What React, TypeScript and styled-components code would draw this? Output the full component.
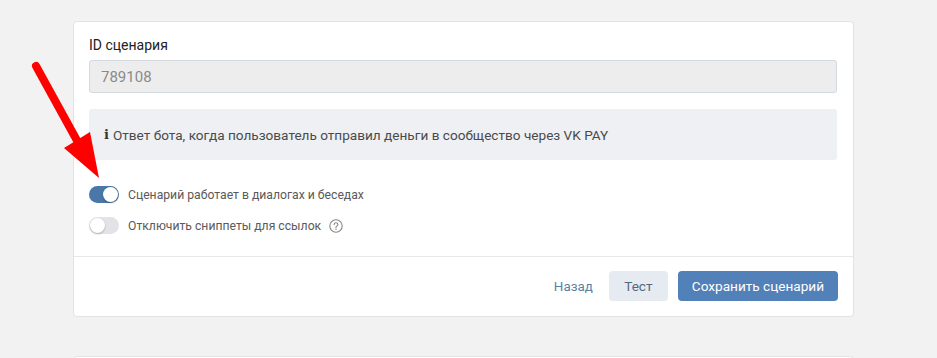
import React, { useState } from "react";
import styled, { createGlobalStyle } from "styled-components";

const GlobalStyle = createGlobalStyle`
  html, body {
    margin: 0;
    padding: 0;
    background: #f2f2f2;
  }
  body {
    font-family: Roboto, "Open Sans", "Liberation Sans", sans-serif;
    -webkit-font-smoothing: antialiased;
  }
`;

const Page = styled.div`
  position: relative;
  width: 937px;
  height: 358px;
  overflow: hidden;
  padding: 21px 0 0 73px;
  box-sizing: border-box;
  display: flex;
  flex-direction: column;
  gap: 39px;
`;

const Card = styled.div`
  width: 781px;
  box-sizing: border-box;
  background: #fff;
  border: 1px solid #e1e3e6;
  border-radius: 4px;
  flex-shrink: 0;
`;

const CardBody = styled.div`
  padding: 15px 16px 22px 15px;
  display: flex;
  flex-direction: column;
`;

const Label = styled.div`
  font-size: 14px;
  color: #222;
  line-height: 16px;
  margin-bottom: 7px;
`;

const Input = styled.div`
  height: 33px;
  box-sizing: border-box;
  border: 1px solid #d3d9de;
  background: #ededed;
  border-radius: 3px;
  padding: 0 11px;
  display: flex;
  align-items: center;
  font-size: 15px;
  color: #8a8a8a;
`;

const InfoBox = styled.div`
  margin-top: 16px;
  height: 51px;
  background: #eef0f3;
  border-radius: 3px;
  padding: 0 15px;
  display: flex;
  align-items: center;
  font-size: 13.6px;
  color: #4a4a4a;
  gap: 4px;
`;

const InfoIcon = styled.span`
  font-family: "DejaVu Serif", "Liberation Serif", serif;
  font-weight: 700;
  font-size: 13px;
  color: #333;
`;

const Toggles = styled.div`
  margin-top: 26px;
  display: flex;
  flex-direction: column;
  gap: 14px;
`;

const ToggleRow = styled.label`
  display: flex;
  align-items: center;
  gap: 9px;
  font-size: 12.2px;
  color: #5a5a5a;
  cursor: pointer;
  height: 17px;
`;

const Track = styled.span<{ $on: boolean }>`
  position: relative;
  width: 30px;
  height: 17px;
  border-radius: 9px;
  background: ${(p) => (p.$on ? "#4a76a8" : "#e1e3e6")};
  flex-shrink: 0;
`;

const Knob = styled.span<{ $on: boolean }>`
  position: absolute;
  top: 1px;
  left: ${(p) => (p.$on ? "14px" : "1px")};
  width: 15px;
  height: 15px;
  border-radius: 50%;
  background: #fff;
  box-shadow: 0 1px 2px rgba(0, 0, 0, 0.25);
`;

const Help = styled.span`
  display: inline-flex;
  width: 14px;
  height: 14px;
  margin-left: -1px;
  color: #888;
`;

const Footer = styled.div`
  border-top: 1px solid #e7e8ec;
  padding: 14px 15px 15px;
  display: flex;
  justify-content: flex-end;
  align-items: center;
  gap: 10px;
`;

const LinkButton = styled.button`
  border: none;
  background: none;
  font: inherit;
  font-size: 13.4px;
  color: #5b7fa6;
  padding: 0 6px;
  height: 30px;
  cursor: pointer;
`;

const Button = styled.button<{ $primary?: boolean }>`
  border: none;
  font: inherit;
  font-size: 13.6px;
  height: 30px;
  border-radius: 4px;
  padding: 0 14px;
  cursor: pointer;
  background: ${(p) => (p.$primary ? "#5181b8" : "#e5ebf1")};
  color: ${(p) => (p.$primary ? "#fff" : "#55677d")};
  min-width: ${(p) => (p.$primary ? "160px" : "59px")};
`;

const Arrow = styled.svg`
  position: absolute;
  left: 0;
  top: 0;
  pointer-events: none;
`;

function Toggle({ on, label, help }: { on: boolean; label: string; help?: boolean }) {
  const [value, setValue] = useState(on);
  return (
    <ToggleRow onClick={() => setValue(!value)}>
      <Track $on={value}>
        <Knob $on={value} />
      </Track>
      {label}
      {help && (
        <Help>
          <svg width="14" height="14" viewBox="0 0 14 14" fill="none">
            <circle cx="7" cy="7" r="6.2" stroke="currentColor" strokeWidth="1.1" />
            <path
              d="M5.1 5.5c0-1.1.8-1.8 1.9-1.8s1.9.7 1.9 1.7c0 .8-.4 1.1-1 1.5-.5.3-.9.6-.9 1.3v.3"
              stroke="currentColor"
              strokeWidth="1.1"
              strokeLinecap="round"
            />
            <circle cx="7" cy="10.3" r=".75" fill="currentColor" />
          </svg>
        </Help>
      )}
    </ToggleRow>
  );
}

export default function App() {
  return (
    <>
      <GlobalStyle />
      <Page>
        <Card>
          <CardBody>
            <Label>ID сценария</Label>
            <Input>789108</Input>
            <InfoBox>
              <InfoIcon>i</InfoIcon>
              Ответ бота, когда пользователь отправил деньги в сообщество через VK PAY
            </InfoBox>
            <Toggles>
              <Toggle on label="Сценарий работает в диалогах и беседах" />
              <Toggle on={false} label="Отключить сниппеты для ссылок" help />
            </Toggles>
          </CardBody>
          <Footer>
            <LinkButton>Назад</LinkButton>
            <Button>Тест</Button>
            <Button $primary>Сохранить сценарий</Button>
          </Footer>
        </Card>
        <Card style={{ height: 40 }} />
        <Arrow width="937" height="358" viewBox="0 0 937 358">
          <line x1="36" y1="66" x2="80" y2="146" stroke="#f00" strokeWidth="8" strokeLinecap="round" />
          <polygon points="64,148 90,132 99,178" fill="#f00" />
        </Arrow>
      </Page>
    </>
  );
}
